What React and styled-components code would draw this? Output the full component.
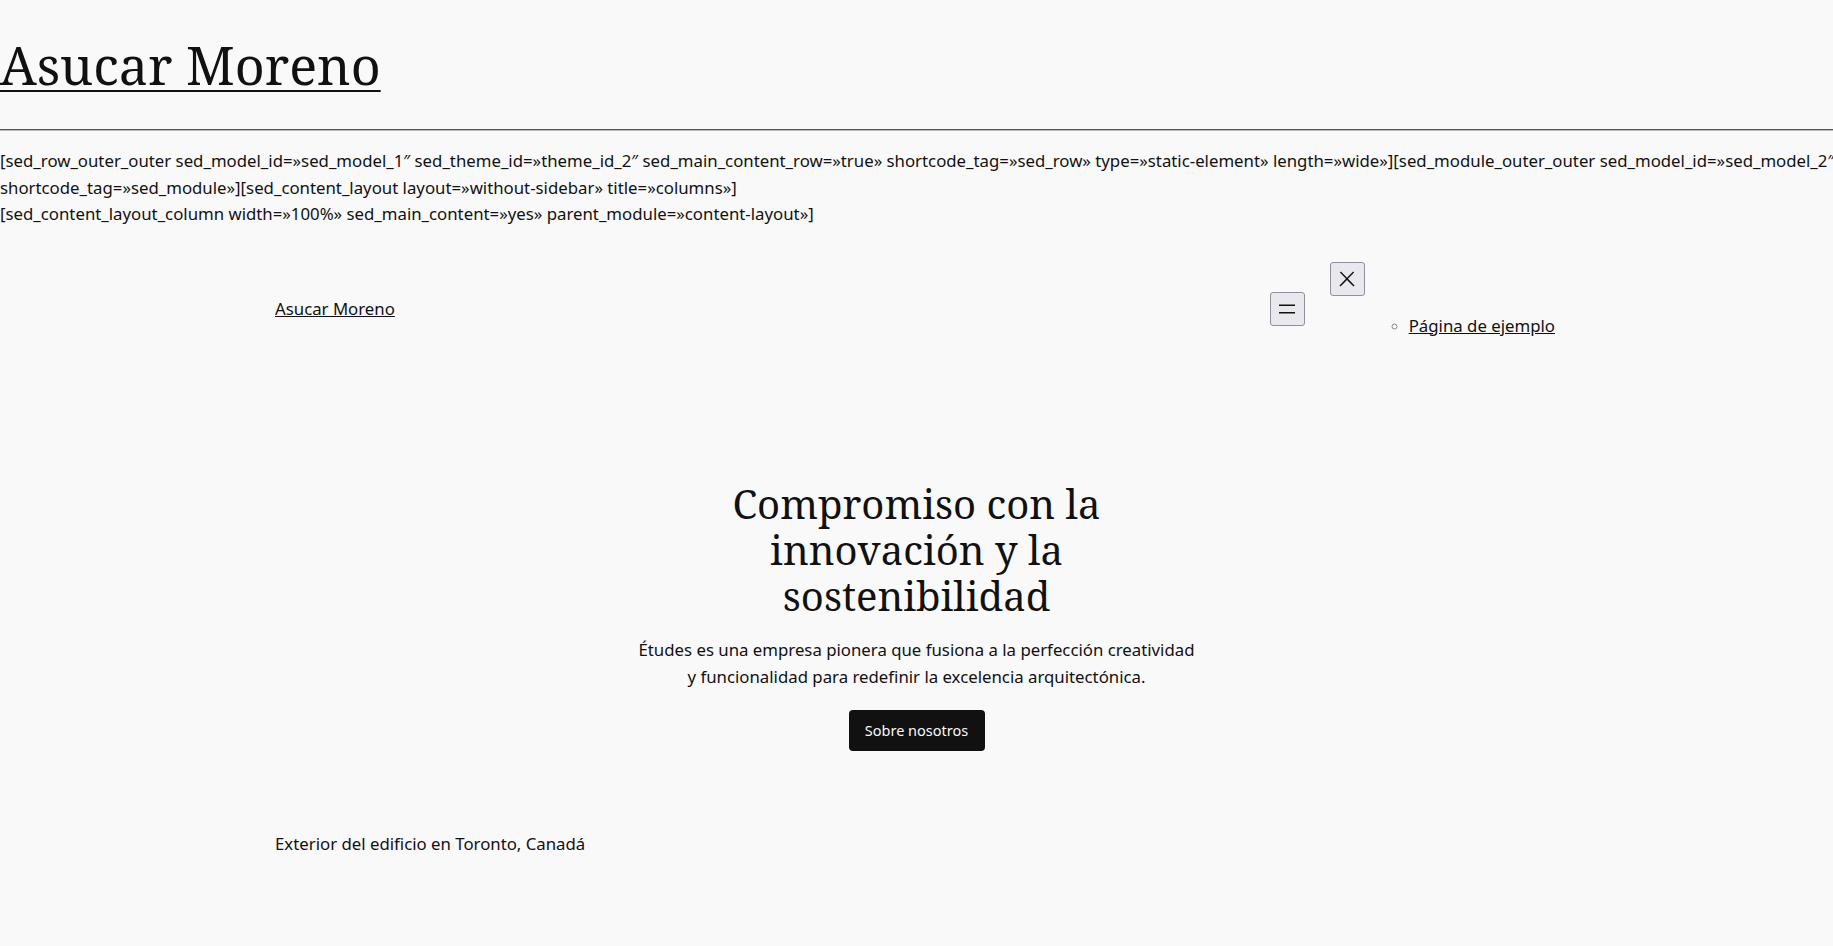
import React from "react";
import styled, { createGlobalStyle } from "styled-components";

const Global = createGlobalStyle`
  html, body { margin: 0; padding: 0; background: #f9f9f9; }
  body {
    color: #111111;
    font-family: "Noto Sans", "Open Sans", sans-serif;
    font-size: 16.8px;
    line-height: 1.56;
  }
  a { color: #111111; }
`;

const Page = styled.div`
  min-height: 946px;
  background: #f9f9f9;
  overflow: hidden;
`;

const SiteHeader = styled.header`
  padding-top: 34px;
`;

const BigTitle = styled.h1`
  margin: 0;
  font-family: "Noto Serif", "DejaVu Serif", serif;
  font-weight: 400;
  font-size: 52px;
  line-height: 1.2;
  a { color: #111; text-decoration-thickness: 2px; text-underline-offset: 5px; }
`;

const Rule = styled.hr`
  margin: 33px 0 0;
  border: 0;
  border-top: 1px solid #555;
  border-bottom: 1px solid #bbb;
`;

const Shortcode = styled.p`
  margin: 17px 0 0;
  line-height: 26.5px;
  white-space: nowrap;
`;

const NavRow = styled.div`
  display: flex;
  justify-content: space-between;
  align-items: center;
  padding: 34px 278px 0 275px;
`;

const SmallTitle = styled.a`
  font-size: 16.8px;
`;

const NavGroup = styled.nav`
  display: flex;
  align-items: center;
  gap: 25px;
`;

const IconButton = styled.button`
  width: 35px;
  height: 34px;
  padding: 0;
  display: flex;
  align-items: center;
  justify-content: center;
  background: #e9e8ed;
  border: 1px solid #8f8f9d;
  border-radius: 3px;
  color: #111;
`;

const Overlay = styled.div`
  display: flex;
  flex-direction: column;
  align-items: flex-start;
`;

const MenuList = styled.ul`
  margin: 17px 0;
  padding-left: 79px;
  list-style: circle;
  li::marker { color: #888; font-size: 14px; }
`;

const Hero = styled.section`
  display: flex;
  flex-direction: column;
  align-items: center;
  text-align: center;
  padding-top: 125px;
`;

const HeroTitle = styled.h2`
  margin: 0;
  max-width: 564px;
  font-family: "Noto Serif", "DejaVu Serif", serif;
  font-weight: 400;
  font-size: 40px;
  line-height: 46px;
`;

const HeroText = styled.p`
  margin: 18px 0 0;
  max-width: 564px;
  line-height: 26.5px;
`;

const DarkButton = styled.a`
  margin-top: 20px;
  display: inline-flex;
  align-items: center;
  justify-content: center;
  width: 136px;
  height: 41px;
  box-sizing: border-box;
  background: #111111;
  color: #f9f9f9;
  border-radius: 4px;
  font-size: 14.5px;
  text-decoration: none;
`;

const Caption = styled.p`
  margin: 80px 0 0;
  padding-left: 275px;
`;

export default function App() {
  return (
    <Page>
      <Global />
      <SiteHeader>
        <BigTitle><a href="#">Asucar Moreno</a></BigTitle>
      </SiteHeader>
      <Rule />
      <Shortcode>
        [sed_row_outer_outer sed_model_id=»sed_model_1″ sed_theme_id=»theme_id_2″ sed_main_content_row=»true» shortcode_tag=»sed_row» type=»static-element» length=»wide»][sed_module_outer_outer sed_model_id=»sed_model_2″
        <br />
        shortcode_tag=»sed_module»][sed_content_layout layout=»without-sidebar» title=»columns»]
        <br />
        [sed_content_layout_column width=»100%» sed_main_content=»yes» parent_module=»content-layout»]
      </Shortcode>
      <NavRow>
        <SmallTitle href="#">Asucar Moreno</SmallTitle>
        <NavGroup>
          <IconButton aria-label="Abrir menú">
            <svg width="24" height="24" viewBox="0 0 24 24">
              <rect x="4" y="7.5" width="16" height="1.5" fill="#111" />
              <rect x="4" y="15" width="16" height="1.5" fill="#111" />
            </svg>
          </IconButton>
          <Overlay>
            <IconButton aria-label="Cerrar menú">
              <svg width="24" height="24" viewBox="0 0 24 24">
                <path d="M13 11.8l6.1-6.3-1-1-6.1 6.2-6.1-6.2-1 1 6.1 6.3-6.5 6.7 1 1 6.5-6.6 6.5 6.6 1-1z" fill="#111" />
              </svg>
            </IconButton>
            <MenuList>
              <li><a href="#">Página de ejemplo</a></li>
            </MenuList>
          </Overlay>
        </NavGroup>
      </NavRow>
      <Hero>
        <HeroTitle>Compromiso con la innovación y la sostenibilidad</HeroTitle>
        <HeroText>Études es una empresa pionera que fusiona a la perfección creatividad y funcionalidad para redefinir la excelencia arquitectónica.</HeroText>
        <DarkButton href="#">Sobre nosotros</DarkButton>
      </Hero>
      <Caption>Exterior del edificio en Toronto, Canadá</Caption>
    </Page>
  );
}
